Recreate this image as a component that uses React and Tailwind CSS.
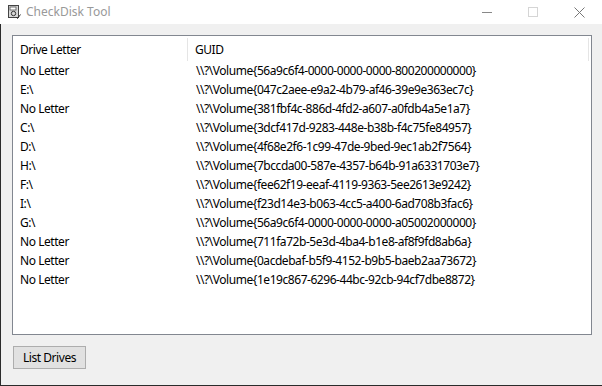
import React from "react";

const drives = [
  ["No Letter", "\\\\?\\Volume{56a9c6f4-0000-0000-0000-800200000000}"],
  ["E:\\", "\\\\?\\Volume{047c2aee-e9a2-4b79-af46-39e9e363ec7c}"],
  ["No Letter", "\\\\?\\Volume{381fbf4c-886d-4fd2-a607-a0fdb4a5e1a7}"],
  ["C:\\", "\\\\?\\Volume{3dcf417d-9283-448e-b38b-f4c75fe84957}"],
  ["D:\\", "\\\\?\\Volume{4f68e2f6-1c99-47de-9bed-9ec1ab2f7564}"],
  ["H:\\", "\\\\?\\Volume{7bccda00-587e-4357-b64b-91a6331703e7}"],
  ["F:\\", "\\\\?\\Volume{fee62f19-eeaf-4119-9363-5ee2613e9242}"],
  ["I:\\", "\\\\?\\Volume{f23d14e3-b063-4cc5-a400-6ad708b3fac6}"],
  ["G:\\", "\\\\?\\Volume{56a9c6f4-0000-0000-0000-a05002000000}"],
  ["No Letter", "\\\\?\\Volume{711fa72b-5e3d-4ba4-b1e8-af8f9fd8ab6a}"],
  ["No Letter", "\\\\?\\Volume{0acdebaf-b5f9-4152-b9b5-baeb2aa73672}"],
  ["No Letter", "\\\\?\\Volume{1e19c867-6296-44bc-92cb-94cf7dbe8872}"],
];

function AppIcon() {
  return (
    <svg width="14" height="14" viewBox="0 0 14 14">
      <rect x="1.5" y="0.5" width="10" height="12" fill="#d8d8d8" stroke="#444" />
      <rect x="3" y="2" width="6" height="3" fill="#fff" stroke="#555" strokeWidth="0.8" />
      <circle cx="6.5" cy="8.5" r="2.2" fill="none" stroke="#333" strokeWidth="1" />
      <path d="M9 12 L10.5 13.5 L13.5 9.5" fill="none" stroke="#333" strokeWidth="1" />
    </svg>
  );
}

export default function App() {
  return (
    <div
      className="w-[602px] h-[386px] flex flex-col bg-[#f0f0f0] overflow-hidden tracking-[-0.45px]"
      style={{ fontFamily: '"Noto Sans", "Open Sans", sans-serif' }}
    >
      {/* title bar */}
      <div className="h-[24px] bg-white flex items-center shrink-0">
        <div className="w-[26px] flex justify-center pl-[1px]">
          <AppIcon />
        </div>
        <span className="text-[12px] text-[#999999] leading-none pb-[1px] tracking-normal">CheckDisk Tool</span>
        <div className="ml-auto flex items-center h-full">
          <div className="w-[46px] flex justify-center">
            <div className="w-[10px] h-px bg-[#888]" />
          </div>
          <div className="w-[46px] flex justify-center">
            <div className="w-[10px] h-[10px] border border-[#d5d5d5]" />
          </div>
          <div className="w-[46px] flex justify-center">
            <svg width="11" height="11" viewBox="0 0 11 11">
              <path d="M0.5 0.5 L10.5 10.5 M10.5 0.5 L0.5 10.5" stroke="#777" strokeWidth="1" />
            </svg>
          </div>
        </div>
      </div>

      {/* body */}
      <div className="flex-1 flex flex-col border-l border-b border-[#2b2b2b] pl-[11px] pr-[10px] pt-[11px]">
        <div className="h-[300px] border border-[#828790] bg-white flex flex-col">
          <div className="h-[25px] flex items-stretch pt-[2px] text-[12px] text-black">
            <div className="w-[175px] border-r border-[#e5e5e5] flex items-center pl-[7px]">
              Drive Letter
            </div>
            <div className="flex-1 border-r border-[#e5e5e5] flex items-center pl-[7px] mr-[2px]">
              GUID
            </div>
          </div>
          <div className="flex flex-col text-[12px] text-black">
            {drives.map(([letter, guid], i) => (
              <div key={i} className="h-[19px] flex items-center">
                <div className="w-[176px] pl-[7px]">{letter}</div>
                <div className="pl-[7px]">{guid}</div>
              </div>
            ))}
          </div>
        </div>
        <div className="pt-[11px] pl-[1px]">
          <button className="w-[73px] h-[23px] bg-[#e1e1e1] border border-[#adadad] text-[12px] text-black flex items-center justify-center leading-none">
            List Drives
          </button>
        </div>
      </div>
    </div>
  );
}
